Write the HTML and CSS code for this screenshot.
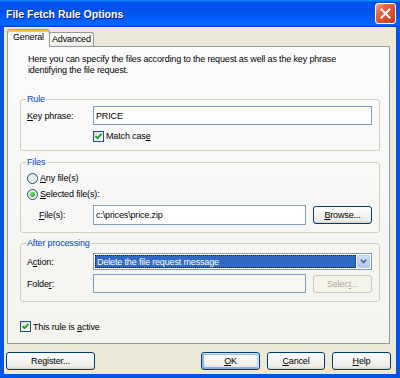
FILE: index.html
```html
<!DOCTYPE html>
<html>
<head>
    <title>File Fetch Rule Options</title>
    <link rel="stylesheet" href="styles.css">
</head>
<body>
    <div class="window">
        <div class="title-bar">
            <span class="title">File Fetch Rule Options</span>
            <span class="close-btn">
                <svg width="11" height="11" viewBox="0 0 11 11">
                    <path d="M1.5 1.5 L9.5 9.5 M9.5 1.5 L1.5 9.5" stroke="#fff" stroke-width="2" stroke-linecap="square"/>
                </svg>
            </span>
        </div>

        <div class="frame">
            <div class="tabs">
                <div class="tab active">General</div>
                <div class="tab">Advanced</div>
            </div>

            <div class="panel">
                <p class="intro">Here you can specify the files according to the request as well as the key phrase<br>identifying the file request.</p>

                <!-- Rule -->
                <fieldset class="group group-rule">
                    <legend>Rule</legend>
                    <div class="row row-edit">
                        <span class="field-label"><u>K</u>ey phrase:</span>
                        <div class="edit">PRICE</div>
                    </div>
                    <div class="row row-check indent">
                        <span class="check checked">
                            <svg width="9" height="9" viewBox="0 0 9 9"><path d="M1.5 4 L3.5 6.2 L7.5 1.8" fill="none" stroke="#21a121" stroke-width="1.8"/></svg>
                        </span>
                        <span class="caption">Match cas<u>e</u></span>
                    </div>
                </fieldset>

                <!-- Files -->
                <fieldset class="group group-files">
                    <legend>Files</legend>
                    <div class="row row-radio">
                        <span class="radio"></span>
                        <span class="caption"><u>A</u>ny file(s)</span>
                    </div>
                    <div class="row row-radio second">
                        <span class="radio selected"><span class="dot"></span></span>
                        <span class="caption"><u>S</u>elected file(s):</span>
                    </div>
                    <div class="row row-file">
                        <span class="field-label sub"><u>F</u>ile(s):</span>
                        <div class="edit">c:\prices\price.zip</div>
                        <button class="btn btn-side"><u>B</u>rowse...</button>
                    </div>
                </fieldset>

                <!-- After processing -->
                <fieldset class="group group-after">
                    <legend>After processing</legend>
                    <div class="row row-combo">
                        <span class="field-label">A<u>c</u>tion:</span>
                        <div class="combo">
                            <span class="combo-value">Delete the file request message</span>
                            <span class="combo-btn">
                                <svg width="7" height="5" viewBox="0 0 7 5"><path d="M0.8 0.8 L3.5 3.6 L6.2 0.8" fill="none" stroke="#4d6185" stroke-width="1.6"/></svg>
                            </span>
                        </div>
                    </div>
                    <div class="row row-folder">
                        <span class="field-label">Folde<u>r</u>:</span>
                        <div class="edit disabled"></div>
                        <button class="btn btn-side" disabled>Selec<u>t</u>...</button>
                    </div>
                </fieldset>

                <div class="row row-check row-active">
                    <span class="check checked">
                        <svg width="9" height="9" viewBox="0 0 9 9"><path d="M1.5 4 L3.5 6.2 L7.5 1.8" fill="none" stroke="#21a121" stroke-width="1.8"/></svg>
                    </span>
                    <span class="caption">This rule is <u>a</u>ctive</span>
                </div>
            </div>

            <div class="footer">
                <button class="btn btn-register">Register...</button>
                <span class="spacer"></span>
                <button class="btn btn-default"><u>O</u>K</button>
                <button class="btn btn-cancel"><u>C</u>ancel</button>
                <button class="btn"><u>H</u>elp</button>
            </div>
        </div>
    </div>
</body>
</html>
```

FILE: styles.css
```css
body {
    margin: 0;
    font-family: "Liberation Sans", Arial, sans-serif;
    font-size: 9px;
    color: #000;
    background-color: #ece9d8;
}
.window {
    width: 400px;
    height: 378px;
    display: flex;
    flex-direction: column;
    letter-spacing: -0.15px;
}
.title-bar {
    flex: none;
    height: 27px;
    box-sizing: border-box;
    display: flex;
    align-items: center;
    justify-content: space-between;
    padding: 0 4px 0 6px;
    background: linear-gradient(180deg, #0997ff, #0053ee 8%, #0050ee 40%, #0066ff 88%, #0066ff 93%, #005bff 95%, #003dd7 96%, #003dd7);
}
.title {
    color: #fff;
    font-weight: bold;
    font-size: 10.5px;
    letter-spacing: 0;
    text-shadow: 1px 1px #0f1c8a;
}
.close-btn {
    width: 21px;
    height: 21px;
    box-sizing: border-box;
    border: 1px solid #fff;
    border-radius: 3px;
    display: flex;
    align-items: center;
    justify-content: center;
    background: linear-gradient(135deg, #f3ad92 0%, #e6653f 30%, #d94a29 70%, #c23a1c 100%);
}
.frame {
    flex: 1;
    display: flex;
    flex-direction: column;
    border: 4px solid #0055e5;
    border-top: 0;
    padding: 2px 6px 0 3px;
}

/* tabs */
.tabs {
    flex: none;
    height: 17px;
    display: flex;
    align-items: flex-end;
}
.tab {
    height: 14px;
    box-sizing: border-box;
    padding: 0 2px;
    margin-left: -1px;
    border: 1px solid #919b9c;
    border-bottom: 0;
    border-radius: 3px 3px 0 0;
    background: linear-gradient(#ffffff, #ecebe6);
    line-height: 13px;
}
.tab.active {
    position: relative;
    height: 18px;
    margin-left: 0;
    margin-bottom: -1px;
    padding: 1px 5px 0;
    border-top-color: #e68b2c;
    box-shadow: inset 0 2px 0 #ffc73c;
    background: #fcfcfe;
}

/* panel */
.panel {
    flex: none;
    height: 298px;
    box-sizing: border-box;
    border: 1px solid #919b9c;
    background: linear-gradient(#fcfcfe, #f4f3ee);
    padding: 7px 9px 0 12px;
}
.intro {
    margin: 0 0 0 8px;
    line-height: 11px;
}
.group {
    margin: 0;
    min-width: 0;
    border: 1px solid #d0d0bf;
    border-radius: 3px;
    padding: 1px 7px 8px 6px;
}
.group legend {
    padding: 0 1px;
    margin-left: -1px;
    line-height: 11px;
    color: #0046d5;
}
.group-rule {
    margin-top: 18px;
}
.group-files {
    margin-top: 6px;
    padding-top: 3px;
    padding-bottom: 7px;
}
.group-after {
    margin-top: 5px;
    padding-top: 4px;
}

/* rows */
.row {
    display: flex;
    align-items: center;
}
.caption {
    white-space: pre;
}
.field-label {
    flex: none;
    width: 66px;
    box-sizing: border-box;
}
.field-label.sub {
    padding-left: 12px;
}
.row-edit .edit {
    height: 19px;
}
.row-check {
    height: 12px;
    margin-top: 5px;
}
.indent {
    padding-left: 66px;
}
.row-radio {
    height: 14px;
}
.row-radio.second {
    margin-top: 2px;
}
.row-file {
    height: 20px;
    margin-top: 4px;
}
.row-combo {
    height: 17px;
}
.row-folder {
    height: 19px;
    margin-top: 4px;
}
.row-active {
    height: 13px;
    margin-top: 18px;
}

/* controls */
.edit {
    flex: 1;
    height: 100%;
    box-sizing: border-box;
    border: 1px solid #7f9db9;
    background: #fff;
    padding: 0 2px;
    display: flex;
    align-items: center;
}
.edit.disabled {
    background: #f7f7f3;
}
.check {
    flex: none;
    width: 11px;
    height: 11px;
    box-sizing: border-box;
    border: 1px solid #1c5180;
    background: linear-gradient(135deg, #dcdcd7, #ffffff);
    margin-right: 2px;
    display: flex;
    align-items: center;
    justify-content: center;
}
.radio {
    flex: none;
    width: 11px;
    height: 11px;
    box-sizing: border-box;
    border: 1px solid #1c5180;
    border-radius: 50%;
    background: linear-gradient(135deg, #dcdcd7, #ffffff);
    margin-right: 2px;
    display: flex;
    align-items: center;
    justify-content: center;
}
.radio .dot {
    width: 5px;
    height: 5px;
    border-radius: 50%;
    background: radial-gradient(circle at 35% 35%, #6fe06b, #1d9c1b);
}
.combo {
    flex: 1;
    height: 100%;
    box-sizing: border-box;
    border: 1px solid #7f9db9;
    background: #fff;
    padding: 1px;
    display: flex;
}
.combo-value {
    flex: 1;
    box-sizing: border-box;
    background: #316ac5;
    color: #fff;
    border: 1px dotted #1a1a1a;
    padding: 0 1px;
    display: flex;
    align-items: center;
}
.combo-btn {
    flex: none;
    width: 13px;
    margin-left: 1px;
    box-sizing: border-box;
    border: 1px solid #b9cdf6;
    border-radius: 2px;
    background: linear-gradient(#d3e0fd, #b2c7f5);
    display: flex;
    align-items: center;
    justify-content: center;
}
.btn {
    height: 18px;
    box-sizing: border-box;
    border: 1px solid #003c74;
    border-radius: 3px;
    background: linear-gradient(180deg, #ffffff, #ecebe6 86%, #d6d0c5);
    font-family: inherit;
    font-size: 9px;
    letter-spacing: inherit;
    color: #000;
    padding: 0;
}
.btn:disabled {
    color: #aca899;
    border-color: #c9c7ba;
    background: #f5f4ea;
}
.btn-side {
    flex: none;
    width: 59px;
    margin-left: 7px;
}

/* footer buttons */
.footer {
    flex: none;
    display: flex;
    gap: 7px;
    margin: 8px -1px 0;
}
.spacer {
    flex: 1;
}
.footer .btn {
    width: 59px;
}
.footer .btn-register {
    width: 89px;
}
.footer .btn-cancel {
    width: 58px;
}
.btn-default {
    box-shadow: inset -1px 1px #cee7ff, inset 1px 2px #98b8ea, inset -2px 2px #bcd4f6, inset 1px -1px #89ade4, inset 2px -2px #89ade4;
}
```
